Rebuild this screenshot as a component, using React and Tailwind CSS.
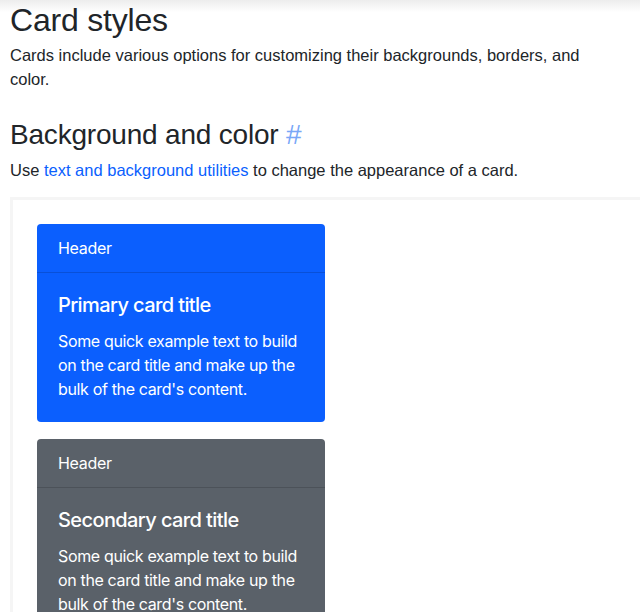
export default function App() {
  const cardText =
    "Some quick example text to build on the card title and make up the bulk of the card's content.";
  return (
    <div className="relative w-[640px] h-[612px] overflow-hidden bg-white text-[#212529] [font-family:'Liberation_Sans',Arial,sans-serif]">
      <div className="absolute left-0 top-0 w-full h-[12px] bg-gradient-to-b from-[#ededed] to-white pointer-events-none" />
      <div className="relative pl-[10px] pt-[1px]">
        <h1 className="text-[32px] leading-[38px] font-normal tracking-[-0.2px]">Card styles</h1>
        <p className="mt-[4px] w-[600px] text-[16.5px] leading-[24px]">
          Cards include various options for customizing their backgrounds, borders, and color.
        </p>
        <h2 className="mt-[27px] text-[28px] leading-[34px] font-normal tracking-[-0.2px]">
          Background and color <span className="text-[#79a7f7]">#</span>
        </h2>
        <p className="mt-[6px] text-[16.5px] leading-[24px]">
          Use <span className="text-[#0b5ffe]">text and background utilities</span> to change the appearance of a card.
        </p>
      </div>
      <div className="relative ml-[10px] mt-[15px] border-[3px] border-r-0 border-b-0 border-[#f5f5f5] pt-[24px] pl-[24px] [font-family:Inter,sans-serif]">
        <div className="flex flex-col gap-[17px]">
          <Card bg="bg-[#0b5ffe]" title="Primary card title" text={cardText} />
          <Card bg="bg-[#5a6169]" title="Secondary card title" text={cardText} />
        </div>
      </div>
    </div>
  );
}

function Card({ bg, title, text }) {
  return (
    <div className={`w-[288px] rounded-[4px] text-white ${bg}`}>
      <div className="px-[21px] py-[12px] text-[16px] leading-[24px] tracking-[-0.3px] border-b border-black/15">Header</div>
      <div className="px-[21px] pt-[20px] pb-[21px]">
        <h5 className="text-[20px] leading-[24px] font-medium tracking-[-0.6px] mb-[12px]">{title}</h5>
        <p className="text-[16px] leading-[24px] tracking-[-0.35px]">{text}</p>
      </div>
    </div>
  );
}
